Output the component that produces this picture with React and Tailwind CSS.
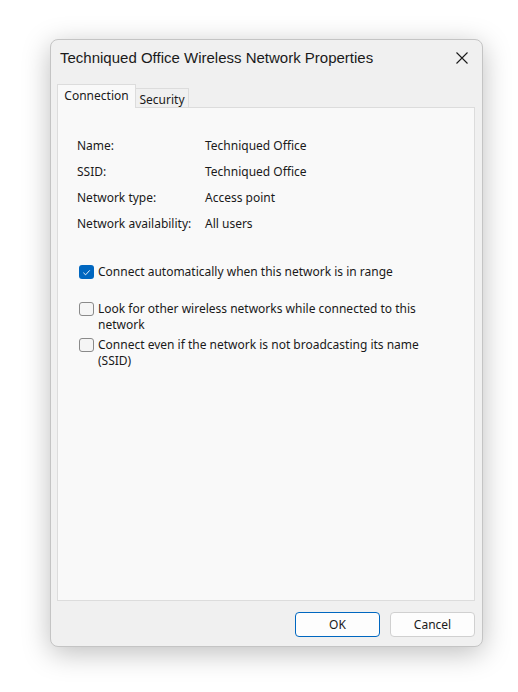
export default function App() {
  const rows = [
    ["Name:", "Techniqued Office"],
    ["SSID:", "Techniqued Office"],
    ["Network type:", "Access point"],
    ["Network availability:", "All users"],
  ];

  return (
    <div className="h-[692px] w-[518px] bg-white pl-[50px] pt-[39px] font-['Noto_Sans','Liberation_Sans',sans-serif] text-[12px] text-[#1a1a1a]">
      <div className="flex h-[608px] w-[433px] flex-col rounded-lg border border-[#c4c4c4] bg-[#f0f0f0] shadow-[0_6px_28px_rgba(0,0,0,0.26)]">
        <div className="flex h-[36px] items-center justify-between pl-[9px] pr-[14px]">
          <span className="font-['Liberation_Sans',Arial,sans-serif] text-[15px] text-[#1a1a1a]">Techniqued Office Wireless Network Properties</span>
          <svg viewBox="0 0 12 12" className="h-3 w-3" fill="none" stroke="#1a1a1a" strokeWidth="1.1">
            <path d="M0.5 0.5 11.5 11.5M11.5 0.5 0.5 11.5" />
          </svg>
        </div>

        <div className="mt-[8px] flex items-end pl-[6px]">
          <div className="relative z-10 -mb-px flex h-[24px] w-[79px] items-center justify-center border border-b-0 border-[#dcdcdc] bg-[#f9f9f9] pb-[1px]">
            Connection
          </div>
          <div className="-mb-px flex h-[20px] w-[53px] items-center justify-center border border-b-0 border-l-0 border-[#dcdcdc] bg-[#f0f0f0] pt-[2px]">
            Security
          </div>
        </div>

        <div className="ml-[6px] h-[494px] w-[418px] border border-[#dcdcdc] bg-[#f9f9f9] pl-[19px] pt-[25px]">
          <div className="flex flex-col">
            {rows.map(([label, value]) => (
              <div key={label} className="flex h-[26px] items-center">
                <span className="w-[128px]">{label}</span>
                <span>{value}</span>
              </div>
            ))}
          </div>

          <div className="mt-[27px] flex flex-col pl-[2px]">
            <label className="flex items-start gap-[4px] leading-[16px]">
              <span className="mt-[1px] flex h-[14px] w-[15px] shrink-0 items-center justify-center rounded-[3px] bg-[#0067c0]">
                <svg viewBox="0 0 10 10" className="h-[9px] w-[9px]" fill="none" stroke="white" strokeWidth="1">
                  <path d="M1.5 5.2 4 7.6 8.6 2.6" />
                </svg>
              </span>
              <span>Connect automatically when this network is in range</span>
            </label>

            <label className="mt-[21px] flex items-start gap-[4px] leading-[16px]">
              <span className="mt-[1px] h-[14px] w-[15px] shrink-0 rounded-[3px] border border-[#8a8a8a] bg-[#f5f5f5]" />
              <span className="w-[330px]">Look for other wireless networks while connected to this network</span>
            </label>

            <label className="mt-[4px] flex items-start gap-[4px] leading-[16px]">
              <span className="mt-[1px] h-[14px] w-[15px] shrink-0 rounded-[3px] border border-[#8a8a8a] bg-[#f5f5f5]" />
              <span className="w-[330px]">Connect even if the network is not broadcasting its name (SSID)</span>
            </label>
          </div>
        </div>

        <div className="mt-[11px] flex justify-end gap-[10px] pr-[7px]">
          <button className="h-[25px] w-[85px] rounded-[4px] border border-[#0067c0] bg-[#fdfdfd] pt-[1px] text-[12px] text-[#1a1a1a]">
            OK
          </button>
          <button className="h-[25px] w-[85px] rounded-[4px] border border-[#d0d0d0] bg-[#fdfdfd] pt-[1px] text-[12px] text-[#1a1a1a]">
            Cancel
          </button>
        </div>
      </div>
    </div>
  );
}
